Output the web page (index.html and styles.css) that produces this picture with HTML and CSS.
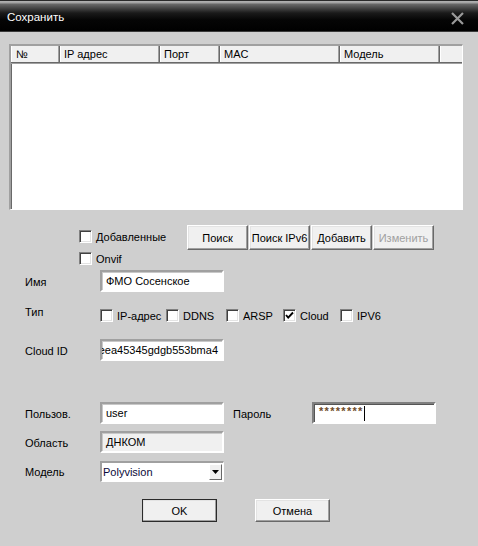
FILE: index.html
```html
<!DOCTYPE html>
<html lang="ru">
<head>
<meta charset="utf-8">
<title>Сохранить</title>
<link rel="stylesheet" href="styles.css">
</head>
<body>
<div class="dialog">
  <div class="titlebar">
    <span class="title">Сохранить</span>
    <svg class="close" width="13" height="13" viewBox="0 0 13 13"><path d="M1 1 L12 12 M12 1 L1 12" stroke="#9a9a9a" stroke-width="2.2" fill="none"/></svg>
  </div>

  <div class="list">
    <div class="list-head">
      <div class="hcell c1">№</div>
      <div class="hcell c2">IP адрес</div>
      <div class="hcell c3">Порт</div>
      <div class="hcell c4">MAC</div>
      <div class="hcell c5">Модель</div>
      <div class="hcell c6"></div>
    </div>
  </div>

  <div class="actions">
    <div class="checks">
      <label class="chk"><span class="box"></span><span>Добавленные</span></label>
      <label class="chk"><span class="box"></span><span>Onvif</span></label>
    </div>
    <div class="btns">
      <div class="btn">Поиск</div>
      <div class="btn">Поиск IPv6</div>
      <div class="btn">Добавить</div>
      <div class="btn disabled">Изменить</div>
    </div>
  </div>

  <div class="row r-name">
    <div class="lbl">Имя</div>
    <div class="field">ФМО Сосенское</div>
  </div>

  <div class="row r-type">
    <div class="lbl lbl-up">Тип</div>
    <div class="types">
      <label class="chk t1"><span class="box"></span><span>IP-адрес</span></label>
      <label class="chk t2"><span class="box"></span><span>DDNS</span></label>
      <label class="chk t3"><span class="box"></span><span>ARSP</span></label>
      <label class="chk t4"><span class="box checked"><svg width="9" height="9" viewBox="0 0 9 9"><path d="M1 4 L3.2 6.6 L8 1.5" stroke="#000" stroke-width="1.9" fill="none"/></svg></span><span>Cloud</span></label>
      <label class="chk t5"><span class="box"></span><span>IPV6</span></label>
    </div>
  </div>

  <div class="row r-cloud">
    <div class="lbl">Cloud ID</div>
    <div class="field clip"><span>eea45345gdgb553bma4</span></div>
  </div>

  <div class="row r-user">
    <div class="lbl">Пользов.</div>
    <div class="field">user</div>
    <div class="lbl lbl2">Пароль</div>
    <div class="field pass"><span class="stars">********</span><span class="caret"></span></div>
  </div>

  <div class="row r-area">
    <div class="lbl">Область</div>
    <div class="field ro">ДНКОМ</div>
  </div>

  <div class="row r-model">
    <div class="lbl">Модель</div>
    <div class="combo">
      <span class="combo-text">Polyvision</span>
      <span class="drop"><svg width="7" height="4" viewBox="0 0 7 4"><path d="M0 0 H7 L3.5 4 Z" fill="#000"/></svg></span>
    </div>
  </div>

  <div class="footer">
    <div class="btn wide default">OK</div>
    <div class="btn wide">Отмена</div>
  </div>
</div>
</body>
</html>
```

FILE: styles.css
```css
html, body {
  margin: 0;
  padding: 0;
}
body {
  width: 478px;
  height: 546px;
  overflow: hidden;
  background: #cfcfcf;
  font-family: "Liberation Sans", Arial, sans-serif;
  font-size: 11px;
  color: #000;
}
.dialog {
  display: flex;
  flex-direction: column;
  height: 546px;
}
.titlebar {
  height: 32px;
  flex: none;
  display: flex;
  align-items: center;
  justify-content: space-between;
  padding: 0 14px 0 7px;
  box-sizing: border-box;
  background: linear-gradient(to bottom, #2a2a2a 0, #2a2a2a 1px, #b4b4b4 1px, #a0a0a0 3px, #6a6a6a 4px, #1a1a1a 13px, #050505 20px, #000 31px, #3a3a3a 31px, #3a3a3a 32px);
}
.title {
  color: #fff;
  font-size: 11.5px;
  margin-top: 1px;
}
.close {
  display: block;
  margin-top: 4px;
}

/* list box */
.list {
  margin: 12px 15px 0 9px;
  height: 166px;
  box-sizing: border-box;
  background: #fff;
  border-top: 2px solid #a0a0a0;
  border-left: 2px solid #a0a0a0;
  border-right: 1px solid #fff;
  border-bottom: 1px solid #fff;
  box-shadow: inset 1px 1px 0 #696969;
}
.list-head {
  display: flex;
  height: 16px;
  background: #f0f0f0;
  border-bottom: 1px solid #696969;
  box-shadow: 0 1px 0 #a0a0a0;
}
.hcell {
  box-sizing: border-box;
  height: 16px;
  line-height: 17px;
  padding-left: 4px;
  border-right: 1px solid #696969;
  box-shadow: inset -1px 0 0 #a0a0a0, inset 1px 0 0 #fff;
  white-space: nowrap;
}
.c1 { width: 49px; padding-left: 5px; }
.c2 { width: 100px; }
.c3 { width: 60px; }
.c4 { width: 120px; }
.c5 { width: 100px; }
.c6 { flex: 1; border-right: none; box-shadow: inset 1px 0 0 #fff; }

/* actions */
.actions {
  display: flex;
  margin-top: 15px;
  padding-left: 79px;
  height: 40px;
}
.checks {
  width: 108px;
  display: flex;
  flex-direction: column;
  gap: 9px;
  padding-top: 5px;
}
.chk {
  display: flex;
  align-items: center;
  gap: 4px;
  height: 13px;
  white-space: nowrap;
}
.box {
  width: 13px;
  height: 13px;
  box-sizing: border-box;
  flex: none;
  background: #fff;
  border-top: 1px solid #808080;
  border-left: 1px solid #808080;
  border-right: 1px solid #fff;
  border-bottom: 1px solid #fff;
  box-shadow: inset 1px 1px 0 #404040, inset -1px -1px 0 #e3e3e3;
  display: flex;
  align-items: center;
  justify-content: center;
}
.box svg { display: block; }
.btns {
  display: flex;
  height: 25px;
}
.btn {
  box-sizing: border-box;
  width: 61px;
  height: 25px;
  display: flex;
  align-items: center;
  justify-content: center;
  background: #f0f0f0;
  border-top: 1px solid #fff;
  border-left: 1px solid #fff;
  border-right: 1px solid #696969;
  border-bottom: 1px solid #696969;
  box-shadow: inset -1px -1px 0 #a0a0a0, inset 1px 1px 0 #e3e3e3;
  white-space: nowrap;
}
.btns .btn + .btn { margin-left: 1px; }
.btn.disabled { color: #a0a0a0; }

/* form rows */
.row {
  display: flex;
  align-items: center;
  padding-left: 25px;
}
.lbl {
  width: 75px;
  flex: none;
  padding-top: 1px;
  white-space: nowrap;
}
.lbl2 { width: 79px; margin-left: 9px; }
.lbl-up { align-self: flex-start; margin-top: -2px; }
.field {
  box-sizing: border-box;
  width: 124px;
  height: 22px;
  flex: none;
  background: #fff;
  border-top: 2px solid #a0a0a0;
  border-left: 2px solid #a0a0a0;
  border-right: 2px solid #fff;
  border-bottom: 2px solid #fff;
  box-shadow: inset 1px 1px 0 #c8c8c8;
  padding: 0 3px 0 4px;
  display: flex;
  align-items: center;
  white-space: nowrap;
  overflow: hidden;
}
.field.ro { background: #f0f0f0; }
.field.clip { justify-content: flex-end; padding-left: 2px; padding-right: 4px; }
.field.pass {
  border-top-color: #808080;
  border-left-color: #808080;
  box-shadow: inset 1px 1px 0 #555;
  padding-left: 5px;
}
.stars { color: #6e4a28; font-size: 11px; letter-spacing: 1.3px; margin-top: -4px; font-weight: bold; }
.caret {
  display: inline-block;
  width: 1px;
  height: 15px;
  background: #000;
  margin-left: 0;
}
.r-name { margin-top: 5px; height: 22px; }
.r-type { margin-top: 15px; height: 17px; }
.types { display: flex; }
.t1 { width: 66px; }
.t2 { width: 60px; }
.t3 { width: 57px; }
.t4 { width: 57px; }
.r-cloud { margin-top: 15px; height: 22px; }
.r-user { margin-top: 41px; height: 22px; }
.r-area { margin-top: 7px; height: 22px; }
.r-model { margin-top: 8px; height: 21px; }
.combo {
  box-sizing: border-box;
  width: 124px;
  height: 21px;
  background: #fff;
  border-top: 2px solid #a0a0a0;
  border-left: 2px solid #a0a0a0;
  border-right: 1px solid #fff;
  border-bottom: 1px solid #fff;
  display: flex;
  align-items: center;
  justify-content: space-between;
  padding: 0 1px 0 1px;
}
.combo-text { color: #0a0a3a; }
.drop {
  box-sizing: border-box;
  width: 13px;
  height: 16px;
  background: #f0f0f0;
  border-top: 1px solid #fff;
  border-left: 1px solid #fff;
  border-right: 1px solid #696969;
  border-bottom: 1px solid #696969;
  display: flex;
  align-items: center;
  justify-content: center;
}
.drop svg { display: block; }

.footer {
  display: flex;
  margin-top: 17px;
  padding-left: 142px;
  gap: 38px;
}
.btn.wide { width: 75px; height: 23px; }
.btn.default { outline: 1px solid #2b2b2b; outline-offset: -1px; border-color: #fff #404040 #404040 #fff; }
```
